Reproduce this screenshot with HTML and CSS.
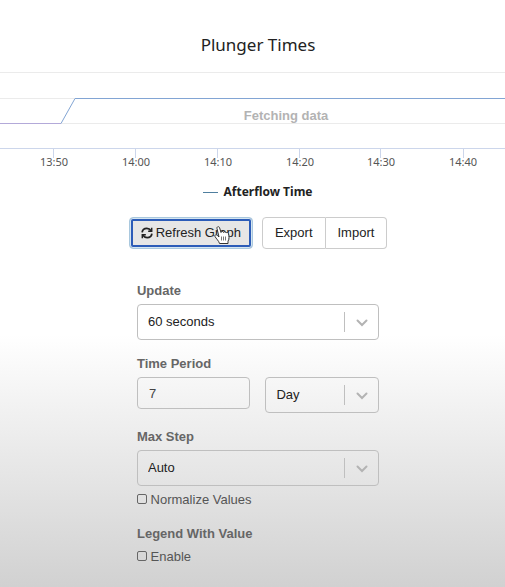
FILE: index.html
```html
<!DOCTYPE html>
<html lang="en">
<head>
    <meta charset="UTF-8">
    <meta name="viewport" content="width=device-width, initial-scale=1.0">
    <title>Plunger Times</title>
    <link rel="stylesheet" href="styles.css">
</head>
<body>
    <h1 class="chart-title">Plunger Times</h1>

    <svg class="chart" viewBox="0 0 505 104" role="img" aria-label="Afterflow Time">
        <g class="grid">
            <path d="M0 4.500H505M0 30.500H505M0 55.500H505"/>
        </g>
        <path class="axis" d="M0 80.500H505M53.500 80V90M135.500 80V90M217.500 80V90M299.500 80V90M380.500 80V90M463.500 80V90"/>
        <path class="series-start" d="M0 55.500H61"/>
        <path class="series" d="M61 55.500L75 30.500H505"/>
        <text class="loading" x="286" y="52">Fetching data</text>
        <g class="ticks">
            <text x="54" y="98">13:50</text>
            <text x="136" y="98">14:00</text>
            <text x="218" y="98">14:10</text>
            <text x="300" y="98">14:20</text>
            <text x="381" y="98">14:30</text>
            <text x="463" y="98">14:40</text>
        </g>
    </svg>

    <div class="legend"><span class="legend-line"></span>Afterflow Time</div>

    <div class="toolbar">
        <button type="button" class="btn btn-refresh">
            <svg class="icon" viewBox="0 0 512 512" aria-hidden="true">
                <path d="M456 30v150h-150M56 482v-150h150" fill="none" stroke="currentColor" stroke-width="64"/>
                <path d="M48 232C62 125 145 62 250 62c75 0 135 36 180 98M464 280c-14 107-97 170-202 170-75 0-135-36-180-98" fill="none" stroke="currentColor" stroke-width="76"/>
            </svg>
            Refresh Graph
            <svg class="cursor" viewBox="0 0 16 20" aria-hidden="true">
                <path d="M5.500 18.500C5 16 2 13.500 1 11.500c-.6-1.500 1-2.300 2.200-1.200L5 12 3 3.500C2.600 1.500 5 1 5.600 2.800L7 7.500c.3-1.500 2.200-1.500 2.600 0 .5-1.200 2.200-1 2.500.4.600-.8 2.100-.5 2.400.8.500 2.300 1 5.300-.5 7.500v2.300z" fill="#fff" stroke="#333" stroke-width="1"/>
                <path d="M7.500 11.500v4M9.500 11.500v4M11.500 11.500v4" stroke="#777" fill="none"/>
            </svg>
        </button>
        <div class="btn-group">
            <button type="button" class="btn">Export</button>
            <button type="button" class="btn">Import</button>
        </div>
    </div>

    <form class="settings">
        <div class="form-group">
            <label for="update">Update</label>
            <div class="select">
                <select id="update"><option>60 seconds</option></select>
                <svg class="chevron" viewBox="0 0 12 8" aria-hidden="true"><path d="M1.500 1.500L6 6l4.500-4.500"/></svg>
            </div>
        </div>
        <div class="form-group">
            <label for="period">Time Period</label>
            <div class="period-row">
                <input id="period" class="text-input" type="text" value="7">
                <div class="select">
                    <select aria-label="Time period unit"><option>Day</option></select>
                    <svg class="chevron" viewBox="0 0 12 8" aria-hidden="true"><path d="M1.500 1.500L6 6l4.500-4.500"/></svg>
                </div>
            </div>
        </div>
        <div class="form-group">
            <label for="step">Max Step</label>
            <div class="select">
                <select id="step"><option>Auto</option></select>
                <svg class="chevron" viewBox="0 0 12 8" aria-hidden="true"><path d="M1.500 1.500L6 6l4.500-4.500"/></svg>
            </div>
            <div class="check">
                <input id="normalize" type="checkbox">
                <label for="normalize">Normalize Values</label>
            </div>
        </div>
        <fieldset class="form-group">
            <legend>Legend With Value</legend>
            <input id="enable" type="checkbox">
            <label for="enable" class="check-label">Enable</label>
        </fieldset>
    </form>
</body>
</html>
```

FILE: styles.css
```css
* {
    box-sizing: border-box;
}

body {
    margin: 0;
    min-height: 100vh;
    font-family: "Liberation Sans", Arial, sans-serif;
    font-size: 13px;
    line-height: 20px;
    color: #222;
    background: linear-gradient(#fff 57%, #d1d1d1);
}

.chart-title {
    margin: 0;
    padding: 33px 0 11px 11px;
    font-family: "Noto Sans", sans-serif;
    font-size: 17px;
    font-weight: normal;
    line-height: 24px;
    text-align: center;
}

.chart {
    display: block;
    width: 100%;
    fill: none;
}

.grid {
    stroke: #ebebeb;
}

.axis {
    stroke: #ccd6eb;
}

.series-start {
    stroke: #b3a9d9;
}

.series {
    stroke: #82a5d4;
}

.loading {
    font-size: 13px;
    font-weight: bold;
    text-anchor: middle;
    fill: #b3b3b3;
}

.ticks {
    font-family: "Noto Sans", sans-serif;
    font-size: 11px;
    text-anchor: middle;
    fill: #555;
}

.legend {
    display: flex;
    justify-content: center;
    align-items: center;
    gap: 5px;
    padding: 10px 0 0 11px;
    font-family: "Noto Sans", sans-serif;
    font-size: 12px;
    font-weight: bold;
    line-height: 20px;
}

.legend-line {
    width: 15px;
    height: 1px;
    background: #4f7f9f;
}

.toolbar {
    display: flex;
    justify-content: center;
    gap: 9px;
    padding: 15px 0 0 11px;
}

.btn {
    height: 32px;
    padding: 0 12px;
    border: 1px solid #ccc;
    border-radius: 4px;
    background: #fff;
    color: #222;
    font: inherit;
    cursor: pointer;
}

.btn-refresh {
    position: relative;
    display: flex;
    align-items: center;
    gap: 3px;
    padding: 0 11px;
    border-color: #a9c8de;
    background: #e6e6e6;
    box-shadow: inset 0 0 0 1px #d5e5f0, inset 0 0 0 3px #2c5cb8;
}

.icon {
    width: 12px;
    height: 12px;
}

.cursor {
    position: absolute;
    top: 7px;
    right: 22px;
    width: 16px;
    height: 20px;
}

.btn-group {
    display: flex;
}

.btn-group .btn:first-child {
    border-radius: 4px 0 0 4px;
}

.btn-group .btn:last-child {
    border-left: 0;
    border-radius: 0 4px 4px 0;
}

.settings {
    display: flex;
    flex-direction: column;
    align-items: center;
    gap: 14px;
    padding: 32px 0 20px 11px;
}

.form-group {
    width: 49%;
    margin: 0;
    padding: 0;
    border: 0;
}

.form-group > label,
.form-group > legend {
    display: block;
    margin-bottom: 3px;
    padding: 0;
    font-weight: bold;
    color: #666;
}

.select {
    position: relative;
}

.select select {
    display: block;
    width: 100%;
    height: 36px;
    padding: 0 45px 0 10px;
    border: 1px solid #bfbfbf;
    border-radius: 4px;
    appearance: none;
    background: none;
    color: #222;
    font: inherit;
}

/* divider left of the chevron */
.select::after {
    content: "";
    position: absolute;
    top: 8px;
    bottom: 8px;
    right: 34px;
    width: 1px;
    background: #bfbfbf;
}

.chevron {
    position: absolute;
    top: 15px;
    right: 11px;
    width: 12px;
    height: 8px;
    fill: none;
    stroke: #b3b3b3;
    stroke-width: 2;
    stroke-linecap: round;
}

.period-row {
    display: grid;
    grid-template-columns: 1fr 1fr;
    gap: 15px;
}

.text-input {
    width: 100%;
    height: 32px;
    padding: 0 11px;
    border: 1px solid #bfbfbf;
    border-radius: 4px;
    background: none;
    color: #444;
    font: inherit;
}

.check {
    margin-top: 4px;
    color: #555;
}

.form-group > .check-label {
    display: inline;
    font-weight: normal;
    color: #555;
}

input[type="checkbox"] {
    appearance: none;
    width: 10px;
    height: 10px;
    margin: 0;
    border: 1px solid #666;
    border-radius: 2px;
}
```
